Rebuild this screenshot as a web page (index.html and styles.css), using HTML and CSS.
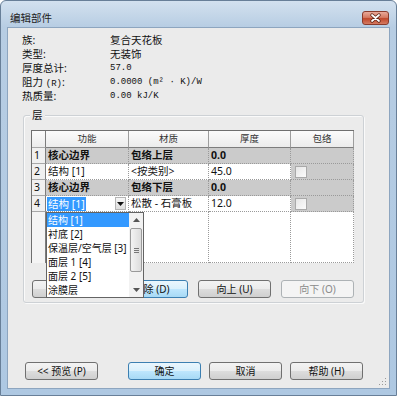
FILE: index.html
```html
<!DOCTYPE html>
<html lang="zh-CN">
<head>
    <meta charset="UTF-8">
    <title>编辑部件</title>
    <link rel="stylesheet" href="styles.css">
</head>
<body>

<div class="window">
    <div class="titlebar">
        <span class="title">编辑部件</span>
        <span class="close">
            <svg width="25" height="12" viewBox="0 0 25 12">
                <path d="M9 3 L16 9 M16 3 L9 9" stroke="#5a2114" stroke-width="3.4" stroke-linecap="round"/>
                <path d="M9 3 L16 9 M16 3 L9 9" stroke="#ffffff" stroke-width="1.8" stroke-linecap="round"/>
            </svg>
        </span>
    </div>

    <div class="client">
        <div class="info">
            <div class="info-row"><span class="info-label">族:</span><span>复合天花板</span></div>
            <div class="info-row"><span class="info-label">类型:</span><span>无装饰</span></div>
            <div class="info-row"><span class="info-label">厚度总计:</span><span class="mono">57.0</span></div>
            <div class="info-row"><span class="info-label">阻力 <span class="mono">(R)</span>:</span><span class="mono">0.0000 (m² · K)/W</span></div>
            <div class="info-row"><span class="info-label">热质量:</span><span class="mono">0.00 kJ/K</span></div>
        </div>

        <div class="group">
            <div class="group-title">层</div>

            <div class="layers">
                <div class="h n"></div>
                <div class="h">功能</div>
                <div class="h">材质</div>
                <div class="h">厚度</div>
                <div class="h">包络</div>

                <div class="n">1</div>
                <div class="c core">核心边界</div>
                <div class="c core">包络上层</div>
                <div class="c core">0.0</div>
                <div class="c core"></div>

                <div class="n">2</div>
                <div class="c">结构 [1]</div>
                <div class="c">&lt;按类别&gt;</div>
                <div class="c">45.0</div>
                <div class="c core"><span class="check"></span></div>

                <div class="n">3</div>
                <div class="c core">核心边界</div>
                <div class="c core">包络下层</div>
                <div class="c core">0.0</div>
                <div class="c core"></div>

                <div class="n">4</div>
                <div class="c combo">
                    <span class="sel-text">结构 [1]</span>
                    <span class="combo-btn">
                        <svg width="7" height="4" viewBox="0 0 7 4"><path d="M0 0 H7 L3.5 4 Z" fill="#111"/></svg>
                    </span>
                    <div class="dropdown">
                        <div class="items">
                            <div class="item on">结构 [1]</div>
                            <div class="item">衬底 [2]</div>
                            <div class="item">保温层/空气层 [3]</div>
                            <div class="item">面层 1 [4]</div>
                            <div class="item">面层 2 [5]</div>
                            <div class="item">涂膜层</div>
                        </div>
                        <div class="scrollbar">
                            <span class="arrow"><svg width="7" height="4" viewBox="0 0 7 4"><path d="M0 4 H7 L3.5 0 Z" fill="#555"/></svg></span>
                            <span class="thumb"><span class="grip"></span></span>
                            <span class="track"></span>
                            <span class="arrow"><svg width="7" height="4" viewBox="0 0 7 4"><path d="M0 0 H7 L3.5 4 Z" fill="#555"/></svg></span>
                        </div>
                    </div>
                </div>
                <div class="c">松散 - 石膏板</div>
                <div class="c">12.0</div>
                <div class="c core"><span class="check"></span></div>

                <div class="n blank-n"></div>
                <div class="c blank"></div>
                <div class="c blank"></div>
                <div class="c blank"></div>
                <div class="c blank"></div>
            </div>

            <div class="btn-row">
                <button class="btn">插入 (I)</button>
                <button class="btn btn-blue">删除 (D)</button>
                <button class="btn">向上 (U)</button>
                <button class="btn" disabled>向下 (O)</button>
            </div>
        </div>

        <div class="footer">
            <button class="btn">&lt;&lt; 预览 (P)</button>
            <button class="btn btn-blue btn-ok">确定</button>
            <button class="btn">取消</button>
            <button class="btn">帮助 (H)</button>
        </div>

        <svg class="grip-corner" width="8" height="8" viewBox="0 0 8 8">
            <rect x="6" y="0" width="1" height="1" fill="#9a9a9a"/>
            <rect x="3" y="3" width="1" height="1" fill="#9a9a9a"/>
            <rect x="6" y="3" width="1" height="1" fill="#9a9a9a"/>
            <rect x="0" y="6" width="1" height="1" fill="#9a9a9a"/>
            <rect x="3" y="6" width="1" height="1" fill="#9a9a9a"/>
            <rect x="6" y="6" width="1" height="1" fill="#9a9a9a"/>
        </svg>
    </div>
</div>

</body>
</html>
```

FILE: styles.css
```css
/* Win7 style "edit assembly" dialog */
body {
    margin: 0;
    background: #ffffff;
    font-family: "Noto Sans", "Noto Sans CJK SC", sans-serif;
    font-size: 10.5px;
    color: #111;
}
.window {
    width: 397px;
    height: 396px;
    box-sizing: border-box;
    border: 1px solid #687f98;
    border-radius: 6px 6px 0 0;
    background: linear-gradient(#d3e1ef, #b7cde3 26px, #aec8e2);
    padding: 0 6px 6px;
    display: flex;
    flex-direction: column;
}
.titlebar {
    height: 26px;
    display: flex;
    justify-content: space-between;
    align-items: flex-start;
    margin: 0 1px 0 3px;
}
.title {
    margin-top: 9px;
    line-height: 16px;
    color: #222;
}
.close {
    margin-top: 10px;
    width: 25px;
    height: 12px;
    border: 1px solid #8a3b2c;
    border-radius: 3px;
    background: linear-gradient(#e9a999, #d57a63 45%, #c0472b 55%, #d47b62);
    display: flex;
}
.client {
    flex: 1;
    border: 1px solid #8da5bf;
    background: #ebebeb;
    position: relative;
}

/* info block */
.info {
    padding: 5px 0 0 14px;
}
.info-row {
    display: flex;
    height: 14px;
    line-height: 14px;
}
.info-label {
    width: 88px;
}
.mono {
    font-family: "Liberation Mono", monospace;
    font-size: 9px;
}

/* group box */
.group {
    margin: 12px 0 0 15px;
    width: 341px;
    box-sizing: border-box;
    border: 1px solid #cdd1d5;
    border-radius: 3px;
    box-shadow: inset 1px 1px #fafafa, 1px 1px #fafafa;
    padding: 0 9px 4px 7px;
}
.group-title {
    margin: -8px 0 0 -1px;
    width: max-content;
    padding: 0 2px;
    height: 14px;
    line-height: 14px;
    background: #ebebeb;
}

/* layers table */
.layers {
    margin-top: 8px;
    height: 133px;
    box-sizing: border-box;
    border-left: 1px solid #6f6f6f;
    border-top: 1px solid #6f6f6f;
    display: grid;
    grid-template-columns: 14px 83px 80px 82px 63px;
    grid-template-rows: 17px repeat(4, 16px) 1fr;
}
.layers > div {
    box-sizing: border-box;
    line-height: 15px;
    white-space: nowrap;
}
.h {
    background: linear-gradient(#fbfbfb, #ececec);
    border-right: 1px solid #9d9d9d;
    border-bottom: 1px solid #7d7d7d;
    text-align: center;
    font-size: 9.5px;
    color: #333;
}
.n {
    background: #f0f0f0;
    border-right: 1px solid #7d7d7d;
    border-bottom: 1px solid #a8a8a8;
    padding-left: 2px;
}
.h.n {
    background: linear-gradient(#fbfbfb, #ececec);
}
.c {
    background: #ffffff;
    border-right: 1px dotted #9a9a9a;
    border-bottom: 1px dotted #9a9a9a;
    padding-left: 2px;
}
.core {
    background: #cbcbcb;
    font-weight: bold;
}
.check {
    display: block;
    width: 10px;
    height: 10px;
    margin: 2px 0 0 2px;
    border: 1px solid #a9a9a9;
    background: linear-gradient(135deg, #e6e6e6, #fbfbfb);
}
.blank {
    background: #ffffff;
}
.blank-n {
    background: #f4f4f4;
    border-bottom: none;
}

/* combo in row 4 */
.layers > .combo {
    position: relative;
    display: flex;
    align-items: center;
    justify-content: space-between;
    padding: 0 2px 0 1px;
    line-height: 14px;
}
.sel-text {
    background: #3399ff;
    color: #fff;
    padding: 0 1px;
}
.combo-btn {
    width: 11px;
    height: 13px;
    box-sizing: border-box;
    border: 1px solid #b5b5b5;
    background: linear-gradient(#f6f6f6, #dedede);
    display: flex;
    align-items: center;
    justify-content: center;
}
.dropdown {
    position: absolute;
    left: 0;
    top: 16px;
    width: 98px;
    height: 86px;
    box-sizing: border-box;
    border: 1px solid #646464;
    background: #fff;
    display: flex;
    z-index: 2;
    color: #111;
}
.items {
    flex: 1;
    overflow: hidden;
}
.item {
    height: 14px;
    line-height: 14px;
    padding-left: 1px;
    white-space: nowrap;
    font-size: 10px;
}
.item.on {
    background: #3399ff;
    color: #fff;
}
.scrollbar {
    width: 14px;
    background: #f2f2f2;
    display: flex;
    flex-direction: column;
    align-items: center;
}
.arrow {
    height: 14px;
    display: flex;
    align-items: center;
    justify-content: center;
}
.thumb {
    width: 10px;
    height: 42px;
    margin-top: 1px;
    border: 1px solid #9a9a9a;
    border-radius: 2px;
    background: linear-gradient(90deg, #f3f3f3, #dcdcdc);
    display: flex;
    align-items: center;
    justify-content: center;
}
.grip {
    width: 5px;
    height: 5px;
    border-top: 1px solid #777;
    border-bottom: 1px solid #777;
    box-sizing: border-box;
    background: linear-gradient(#777, #777) center / 5px 1px no-repeat;
}
.track {
    flex: 1;
}

/* buttons */
.btn-row {
    display: flex;
    justify-content: space-between;
    width: 322px;
    margin: 17px 0 0 1px;
}
.btn {
    width: 73px;
    height: 18px;
    padding: 0;
    border: 1px solid #707070;
    border-radius: 3px;
    background: linear-gradient(#f3f3f3, #ebebeb 50%, #dddddd 51%, #cfcfcf);
    font-family: "Noto Sans", "Noto Sans CJK SC", sans-serif;
    font-size: 10px;
    line-height: 16px;
    color: #111;
}
.btn-blue {
    border-color: #3c7fb1;
    background: linear-gradient(#eaf6fd, #d9f0fc 50%, #bee6fd 51%, #a7d9f5);
}
.btn:disabled {
    border-color: #adb2b5;
    background: #f4f4f4;
    color: #8a8a8a;
}
.footer {
    display: flex;
    gap: 8px;
    margin: 59px 0 0 17px;
}
.btn-ok {
    margin-left: 22px;
}
.grip-corner {
    position: absolute;
    right: 2px;
    bottom: 2px;
}
```
